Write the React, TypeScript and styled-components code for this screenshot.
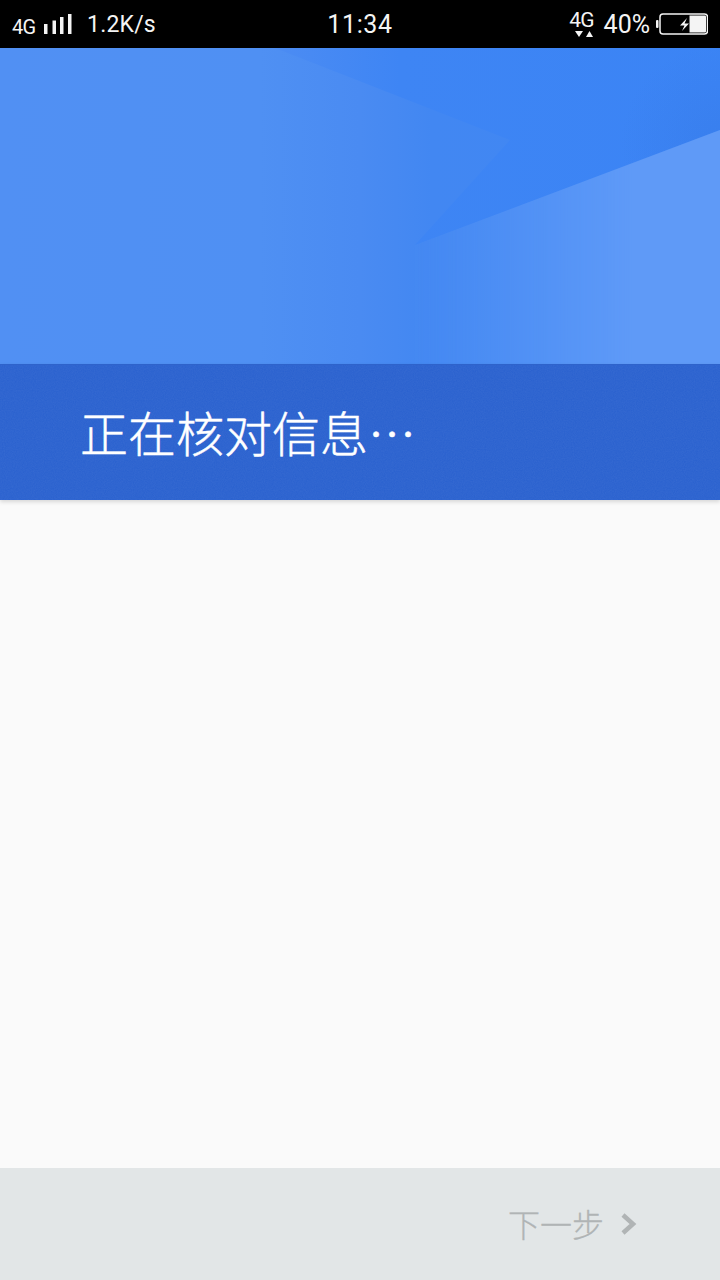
import React from 'react';
import styled, { createGlobalStyle } from 'styled-components';

const GlobalStyle = createGlobalStyle`
  html, body {
    margin: 0;
    padding: 0;
    background: #fafafa;
  }
  body {
    font-family: 'Roboto', 'Noto Sans CJK SC', sans-serif;
  }
`;

const Page = styled.div`
  width: 720px;
  height: 1280px;
  display: flex;
  flex-direction: column;
  overflow: hidden;
  background: #fafafa;
`;

const StatusBar = styled.div`
  height: 48px;
  flex: none;
  background: #000;
  color: #f4f4f4;
  display: grid;
  grid-template-columns: 1fr auto 1fr;
  align-items: center;
  padding: 0 12px;
`;

const StatusLeft = styled.div`
  display: flex;
  align-items: center;
`;

const StatusRight = styled.div`
  display: flex;
  align-items: center;
  justify-content: flex-end;
`;

const NetLabel = styled.span`
  width: 25px;
  font-size: 20px;
  letter-spacing: -0.8px;
  margin-top: 6px;
`;

const SignalIcon = styled.svg`
  margin-left: 6px;
`;

const Speed = styled.span`
  font-size: 23px;
  margin-left: 15px;
  letter-spacing: 0.2px;
`;

const Clock = styled.span`
  font-size: 25px;
  letter-spacing: 0.6px;
`;

const Battery = styled.span`
  font-size: 25px;
  margin: 0 6px 0 9px;
`;

const NetStack = styled.div`
  width: 26px;
  height: 36px;
  padding-top: 2px;
  box-sizing: border-box;
  display: flex;
  flex-direction: column;
  align-items: center;
`;

const NetStackLabel = styled.span`
  font-size: 21px;
  line-height: 25px;
  letter-spacing: -0.8px;
`;

const NetArrows = styled.svg`
  flex: none;
  margin-top: -3px;
`;

const Hero = styled.div`
  position: relative;
  height: 316px;
  flex: none;
  overflow: hidden;
  background: linear-gradient(90deg, #5190f3 0%, #4f90f3 36%, #4a8bf2 50%, #4287f2 60%, #3f87f4 100%);

  &::before {
    content: '';
    position: absolute;
    inset: 0;
    clip-path: polygon(275px 0, 720px 0, 720px 82px, 415px 197px, 510px 92px);
    background:
      radial-gradient(circle at 720px 95px, rgba(45, 100, 200, 0.16), transparent 100px),
      linear-gradient(90deg, #4c8cf3 275px, #3e85f4 400px, #3b84f5 100%);
  }

  &::after {
    content: '';
    position: absolute;
    inset: 0;
    clip-path: polygon(720px 82px, 720px 316px, 415px 316px, 415px 197px);
    background: #5f9af7;
    mask-image: linear-gradient(90deg, rgba(0, 0, 0, 0.05) 58%, #000 88%);
  }
`;

const Banner = styled.div`
  position: relative;
  height: 135px;
  flex: none;
  display: flex;
  align-items: center;
  padding-left: 80px;
  background: #2b62cf;
  box-shadow: 0 2px 4px rgba(0, 0, 0, 0.14);
  border-top: 1px solid #2e63cb;
`;

const Grain = styled.svg`
  position: absolute;
  inset: 0;
  width: 100%;
  height: 100%;
  opacity: 0.05;
`;

const BannerTitle = styled.h1`
  position: relative;
  margin: 0 0 3px;
  color: #fff;
  font-family: 'Noto Sans CJK SC', sans-serif;
  font-size: 48px;
  font-weight: 300;
  -webkit-text-stroke: 0.5px #fff;
  line-height: 1;
  white-space: nowrap;
`;

const Body = styled.div`
  flex: 1;
`;

const Footer = styled.div`
  height: 112px;
  flex: none;
  background: #e2e6e7;
  display: flex;
  align-items: center;
  justify-content: flex-end;
  padding-right: 82px;
`;

const NextButton = styled.button`
  display: flex;
  align-items: center;
  gap: 16px;
  padding: 0;
  border: 0;
  background: none;
  color: #b0b4b5;
  font-family: 'Noto Sans CJK SC', sans-serif;
  font-size: 32px;
  font-weight: 300;
  -webkit-text-stroke: 0.3px #b0b4b5;
  line-height: 40px;
`;

const NextLabel = styled.span`
  margin-top: -2px;
`;

const App = () => (
  <Page>
    <GlobalStyle />
    <StatusBar>
      <StatusLeft>
        <NetLabel>4G</NetLabel>
        <SignalIcon width="29" height="24" viewBox="0 0 29 24">
          <rect x="1" y="12" width="3.5" height="10" fill="#f4f4f4" />
          <rect x="9.5" y="8.5" width="3.5" height="13.5" fill="#f4f4f4" />
          <rect x="17" y="5" width="3.5" height="17" fill="#f4f4f4" />
          <rect x="25" y="2" width="3.5" height="20" fill="#f4f4f4" />
        </SignalIcon>
        <Speed>1.2K/s</Speed>
      </StatusLeft>
      <Clock>11:34</Clock>
      <StatusRight>
        <NetStack>
          <NetStackLabel>4G</NetStackLabel>
          <NetArrows width="26" height="9" viewBox="0 0 26 9">
            <path d="M6 1h8l-4 6z" fill="#f4f4f4" />
            <path d="M17 7h7l-3.500-6z" fill="#f4f4f4" />
          </NetArrows>
        </NetStack>
        <Battery>40%</Battery>
        <svg width="52" height="22" viewBox="0 0 52 22">
          <rect x="0" y="7" width="2.5" height="8" rx="1" fill="#f4f4f4" />
          <rect x="4" y="1" width="47.5" height="20" rx="3" fill="none" stroke="#f4f4f4" strokeWidth="1.5" />
          <path d="M33.5 2.5H49a1 1 0 0 1 1 1v15a1 1 0 0 1-1 1H33.5z" fill="#f4f4f4" />
          <path d="M31 5l-7 7.500h4.500L26 18l7-7.500h-4.500z" fill="#f4f4f4" />
        </svg>
      </StatusRight>
    </StatusBar>
    <Hero />
    <Banner>
      <Grain aria-hidden="true">
        <filter id="grain">
          <feTurbulence type="fractalNoise" baseFrequency="0.9" numOctaves="2" />
          <feColorMatrix values="0 0 0 0 1  0 0 0 0 1  0 0 0 0 1  0 0 0 1.2 -0.2" />
        </filter>
        <rect width="100%" height="100%" filter="url(#grain)" />
      </Grain>
      <BannerTitle>正在核对信息…</BannerTitle>
    </Banner>
    <Body />
    <Footer>
      <NextButton>
        <NextLabel>下一步</NextLabel>
        <svg width="18" height="24" viewBox="0 0 18 24">
          <path d="M3 3l10 9-10 9" fill="none" stroke="#b0b4b5" strokeWidth="4.5" />
        </svg>
      </NextButton>
    </Footer>
  </Page>
);

export default App;
